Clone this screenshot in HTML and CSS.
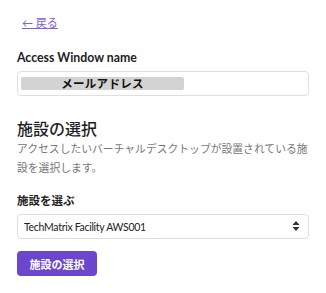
FILE: index.html
```html
<!DOCTYPE html>
<html lang="ja">
<head>
    <meta charset="UTF-8" />
    <title>施設の選択</title>
    <link rel="stylesheet" href="styles.css">
</head>
<body>
    <div class="page">
        <a class="back-link" href="#">← 戻る</a>

        <div class="field">
            <label class="field-label">Access Window name</label>
            <div class="name-box">
                <span class="masked">メールアドレス</span>
            </div>
        </div>

        <h2 class="section-title">施設の選択</h2>
        <p class="section-desc">アクセスしたいバーチャルデスクトップが設置されている施設を選択します。</p>

        <div class="field">
            <label class="field-label jp">施設を選ぶ</label>
            <div class="select-wrap">
                <select class="select">
                    <option>TechMatrix Facility AWS001</option>
                </select>
                <svg class="select-arrows" width="8" height="12" viewBox="0 0 8 12">
                    <path d="M4 1 L7.5 5 H0.5 Z" fill="#333" />
                    <path d="M4 11 L7.5 7 H0.5 Z" fill="#333" />
                </svg>
            </div>
        </div>

        <button class="submit-btn">施設の選択</button>
    </div>
</body>
</html>
```

FILE: styles.css
```css
:root {
    --purple: #6a47cc;
    --link: #7b62d8;
    --text: #222222;
    --muted: #777777;
    --border: #dcdfe4;
}

* {
    margin: 0;
    padding: 0;
    box-sizing: border-box;
}

body {
    background: #ffffff;
    font-family: Lato, "Noto Sans CJK JP", sans-serif;
    color: var(--text);
}

.page {
    display: flex;
    flex-direction: column;
    align-items: flex-start;
    padding: 15px 17px 0 17px;
    width: 326px;
}

.back-link {
    font-size: 11px;
    line-height: 15px;
    color: var(--link);
    margin-left: 5px;
    text-decoration: underline;
}

.field {
    display: flex;
    flex-direction: column;
    width: 100%;
}

.back-link + .field {
    margin-top: 20px;
}

.field-label {
    font-size: 12.3px;
    font-weight: bold;
    line-height: 16px;
    margin-bottom: 5px;
}

.field-label.jp {
    font-size: 11.5px;
    font-weight: bold;
}

.name-box {
    height: 25px;
    border: 1px solid var(--border);
    border-radius: 4px;
    display: flex;
    align-items: center;
    padding-left: 3px;
}

.masked {
    width: 163px;
    height: 13px;
    background: #d3d3d3;
    border-radius: 2px;
    text-align: center;
    font-family: "Noto Sans CJK JP", sans-serif;
    font-size: 11.5px;
    font-weight: bold;
    line-height: 13px;
    letter-spacing: 0.3px;
    color: #111111;
}

.section-title {
    margin-top: 21px;
    font-size: 16px;
    font-weight: 500;
    line-height: 22px;
    font-family: "Noto Sans CJK JP", sans-serif;
    color: #1e1e1e;
}

.section-desc {
    font-family: "Noto Sans CJK JP", sans-serif;
    font-size: 10.8px;
    line-height: 19px;
    color: var(--muted);
    width: 100%;
}

.section-desc + .field {
    margin-top: 16px;
}

.select-wrap {
    position: relative;
    width: 100%;
}

.select {
    appearance: none;
    -webkit-appearance: none;
    width: 100%;
    height: 25px;
    border: 1px solid var(--border);
    border-radius: 4px;
    background: #ffffff;
    font-family: Lato, sans-serif;
    font-size: 10.5px;
    color: #222222;
    padding-left: 6px;
    letter-spacing: -0.3px;
}

.select-arrows {
    position: absolute;
    right: 9px;
    top: 6px;
    pointer-events: none;
}

.submit-btn {
    margin-top: 12px;
    width: 80px;
    height: 25px;
    border: none;
    border-radius: 4px;
    background: var(--purple);
    color: #ffffff;
    font-family: "Noto Sans CJK JP", sans-serif;
    font-size: 11px;
    font-weight: bold;
}
```
